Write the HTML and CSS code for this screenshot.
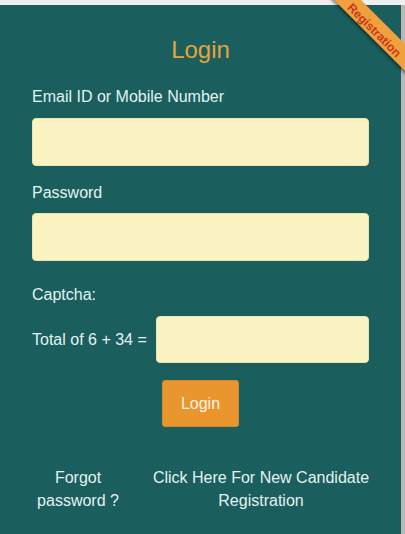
FILE: index.html
```html
<!DOCTYPE html>
<html>
<head>
<meta charset="utf-8">
<link rel="stylesheet" href="styles.css">
</head>
<body>
<div class="page">
  <div class="topbar"></div>
  <div class="panel">
    <div class="ribbon"><span class="ribbon-text">Registration</span></div>
    <h1 class="title">Login</h1>
    <form class="form">
      <label class="label label-first">Email ID or Mobile Number</label>
      <input class="field" type="text">
      <label class="label label-second">Password</label>
      <input class="field" type="password">
      <label class="label label-captcha">Captcha:</label>
      <div class="captcha-row">
        <span class="captcha-text">Total of 6 + 34 =</span>
        <input class="field captcha-field" type="text">
      </div>
      <div class="actions">
        <button type="button" class="btn">Login</button>
      </div>
    </form>
    <div class="links">
      <a class="link">Forgot password ?</a>
      <a class="link">Click Here For New Candidate Registration</a>
    </div>
  </div>
</div>
</body>
</html>
```
FILE: styles.css
```css
html, body {
  margin: 0;
  padding: 0;
  height: 100%;
  overflow: hidden;
}
body {
  font-family: "Liberation Sans", Arial, sans-serif;
}
.page {
  position: relative;
  width: 100%;
  height: 100%;
  overflow: hidden;
  background: linear-gradient(to right, #8c8c8c, #b8b8b8);
}
.topbar {
  height: 5px;
  background: #eeefee;
}
.panel {
  width: 401px;
  height: calc(100% - 5px);
  background: #1a5e5d;
  box-sizing: border-box;
  padding: 31px 32px 0 32px;
  color: #e2f3f2;
}
.ribbon {
  position: absolute;
  left: 306px;
  top: 19px;
  width: 140px;
  height: 19px;
  line-height: 19px;
  background: #f0a03c;
  text-align: center;
  transform: rotate(45deg);
  box-shadow: -1px 2px 3px rgba(0, 0, 0, 0.45);
}
.ribbon-text {
  color: #c8391f;
  font-size: 12px;
  font-weight: bold;
  position: relative;
  top: 1px;
}
.title {
  margin: 0;
  font-size: 24px;
  line-height: 28px;
  font-weight: normal;
  color: #e5a43c;
  text-align: center;
}
.form {
  display: flex;
  flex-direction: column;
}
.label {
  display: block;
  font-size: 16px;
  line-height: 20px;
  margin-bottom: 11px;
}
.label-first {
  margin-top: 23px;
}
.label-second {
  margin-top: 17px;
  margin-bottom: 10px;
}
.label-captcha {
  margin-top: 24px;
}
.field {
  display: block;
  box-sizing: border-box;
  width: 100%;
  height: 48px;
  margin: 0;
  border: 1px solid #ece3a6;
  border-radius: 4px;
  background: #fbf3c1;
  outline: none;
}
.captcha-row {
  display: flex;
  align-items: center;
  gap: 9px;
}
.captcha-text {
  font-size: 16px;
  line-height: 20px;
  white-space: nowrap;
}
.captcha-field {
  flex: 1;
  height: 47px;
}
.actions {
  display: flex;
  justify-content: center;
  margin-top: 17px;
}
.btn {
  width: 77px;
  height: 47px;
  background: #e9962f;
  border: 1px solid #d8882a;
  border-radius: 3px;
  color: #fbf3e4;
  font-family: "Liberation Sans", Arial, sans-serif;
  font-size: 16px;
  padding: 0;
}
.links {
  display: grid;
  grid-template-columns: 92px 224px;
  column-gap: 25px;
  margin-top: 39px;
  margin-right: -4px;
}
.link {
  font-size: 16px;
  line-height: 23px;
  text-align: center;
  color: #e4f2f1;
}
```
